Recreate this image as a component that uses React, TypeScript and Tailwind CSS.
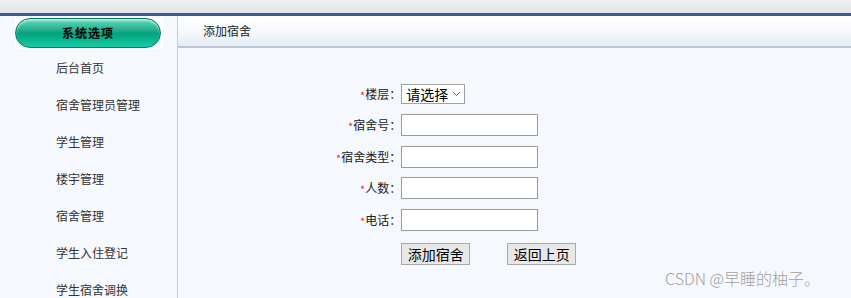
const menuItems = ["后台首页", "宿舍管理员管理", "学生管理", "楼宇管理", "宿舍管理", "学生入住登记", "学生宿舍调换"];

const fields = [
  { label: "楼层", type: "select" },
  { label: "宿舍号", type: "text" },
  { label: "宿舍类型", type: "text" },
  { label: "人数", type: "text" },
  { label: "电话", type: "text" },
];

function FormRow({ label, type }: { label: string; type: string }) {
  return (
    <tr>
      <td className="h-[31.5px] text-right pr-0 text-[12px] text-[#222] whitespace-nowrap">
        <span className="text-[#e33] text-[11px] relative top-[1px]">*</span>
        {label}：
      </td>
      <td className="h-[31.5px]">
        {type === "select" ? (
          <div className="w-[64px] h-[20px] border border-[#a0a0a0] bg-white flex items-center justify-between pl-[4px] pr-[3px]">
            <span className="text-[14px] text-black leading-none">请选择</span>
            <svg width="9" height="6" viewBox="0 0 9 6" fill="none" stroke="#666" strokeWidth="1">
              <path d="M1 1 L4.5 4.5 L8 1" />
            </svg>
          </div>
        ) : (
          <input className="w-[137px] h-[22px] border border-[#9a9a9a] bg-white block outline-none" />
        )}
      </td>
    </tr>
  );
}

export default function App() {
  return (
    <div
      className="relative w-[851px] h-[298px] overflow-hidden bg-[#f5f8fd]"
      style={{ fontFamily: '"Noto Sans CJK SC", "Liberation Sans", sans-serif' }}
    >
      {/* top strip */}
      <div className="h-[16px] bg-gradient-to-b from-[#eef0f3] to-[#e1e4e8] border-b-[3px] border-[#3a5b91]" />

      <div className="flex h-[282px]">
        {/* sidebar */}
        <div className="w-[178px] shrink-0 border-r border-[#bccfe4] bg-[#f5f8fd]">
          <div className="ml-[15px] mt-[1px] w-[148px] h-[32px] bg-white flex items-center">
            <div className="w-[146px] h-[30px] rounded-full border border-[#0c7a62] bg-gradient-to-b from-[#5edcc0] via-[#03a27e] to-[#14cca5] flex items-center justify-center shadow-[inset_0_2px_2px_rgba(255,255,255,0.5)]">
              <span className="text-[12px] font-bold text-black tracking-[1px]">系统选项</span>
            </div>
          </div>
          <ul>
            {menuItems.map((item) => (
              <li key={item} className="h-[37px] flex items-center pl-[56px] text-[12px] text-[#333]">
                {item}
              </li>
            ))}
          </ul>
        </div>

        {/* main */}
        <div className="flex-1">
          <div className="h-[32px] bg-gradient-to-b from-[#ffffff] via-[#f7f9fc] to-[#e4ecf7] border-b-[2px] border-[#bcc6d0] flex items-center pl-[25px] text-[12px] text-[#222]">
            添加宿舍
          </div>
          <div className="pl-[158px] pt-[30px]">
            <table className="border-collapse">
              <tbody>
                {fields.map((f) => (
                  <FormRow key={f.label} label={f.label} type={f.type} />
                ))}
                <tr>
                  <td />
                  <td className="pt-[7px]">
                    <div className="flex gap-[37px]">
                      <button className="w-[69px] h-[22px] border border-[#a9a9a9] bg-[#e8e8e8] text-[14px] text-black leading-none">
                        添加宿舍
                      </button>
                      <button className="w-[69px] h-[22px] border border-[#a9a9a9] bg-[#e8e8e8] text-[14px] text-black leading-none">
                        返回上页
                      </button>
                    </div>
                  </td>
                </tr>
              </tbody>
            </table>
          </div>
        </div>
      </div>

      <div className="absolute left-[665px] top-[266px] text-[16px] text-[#a0a0a0] font-light [text-shadow:0_0_1px_#fff]">
        CSDN @早睡的柚子。
      </div>
    </div>
  );
}
